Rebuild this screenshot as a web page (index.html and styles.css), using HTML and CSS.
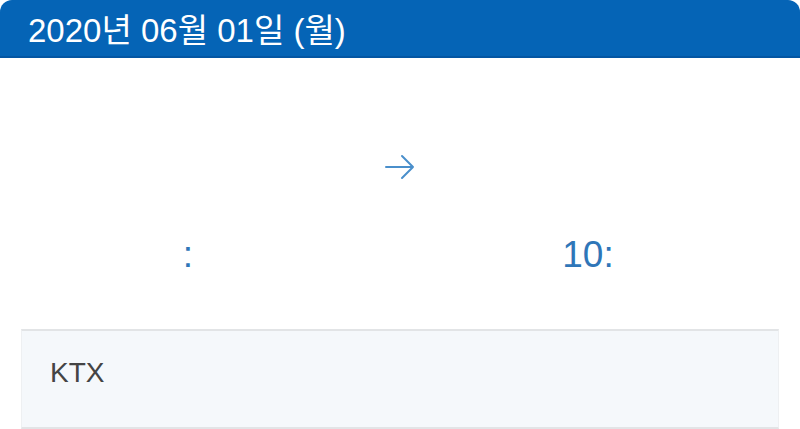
FILE: index.html
```html
<!DOCTYPE html>
<html lang="ko">
<head>
<meta charset="utf-8">
<link rel="stylesheet" href="styles.css">
</head>
<body>
<div class="page">
  <header class="date-bar">2020년 06월 01일 (월)</header>
  <section class="route">
    <div class="arrow-row">
      <svg class="arrow" width="30" height="26" viewBox="0 0 30 26" aria-hidden="true">
        <path d="M1 13 H28 M17 2 L28 13 L17 24" fill="none" stroke="#4a8fcb" stroke-width="2" stroke-linecap="round" stroke-linejoin="round"/>
      </svg>
    </div>
    <div class="times">
      <div class="time-cell"><span class="time">:</span></div>
      <div class="time-cell"><span class="time">10:</span></div>
    </div>
  </section>
  <section class="train">
    <span class="train-name">KTX</span>
  </section>
</div>
</body>
</html>
```
FILE: styles.css
```css
html, body {
  margin: 0;
  padding: 0;
  background: #ffffff;
}
body {
  font-family: "Liberation Sans", "Noto Sans CJK KR", Arial, sans-serif;
  width: 800px;
  height: 429px;
  overflow: hidden;
}
.page {
  display: flex;
  flex-direction: column;
}
.date-bar {
  height: 50px;
  padding: 6px 0 0 28px;
  background: #0564b6;
  border-bottom: 2px solid #0456a3;
  border-radius: 12px 12px 0 0;
  color: #ffffff;
  font-size: 33px;
  line-height: 50px;
  white-space: nowrap;
}
.route {
  display: flex;
  flex-direction: column;
  padding-top: 96px;
}
.arrow-row {
  display: flex;
  justify-content: center;
  height: 26px;
}
.arrow {
  display: block;
}
.times {
  display: flex;
  margin-top: 55px;
  margin-bottom: 54px;
}
.time-cell {
  flex: 1;
  text-align: center;
}
.time {
  display: inline-block;
  padding-right: 24px;
  color: #2f76b8;
  font-size: 37px;
  line-height: 40px;
}
.train {
  display: flex;
  align-items: flex-start;
  height: 70px;
  margin: 0 21px;
  padding: 26px 0 0 28px;
  background: #f5f8fb;
  border-top: 2px solid #e2e4e6;
  border-bottom: 2px solid #e2e4e6;
  border-left: 1px solid #eef0f2;
  border-right: 1px solid #eef0f2;
}
.train-name {
  color: #444444;
  font-size: 28px;
  line-height: 32px;
}
```
